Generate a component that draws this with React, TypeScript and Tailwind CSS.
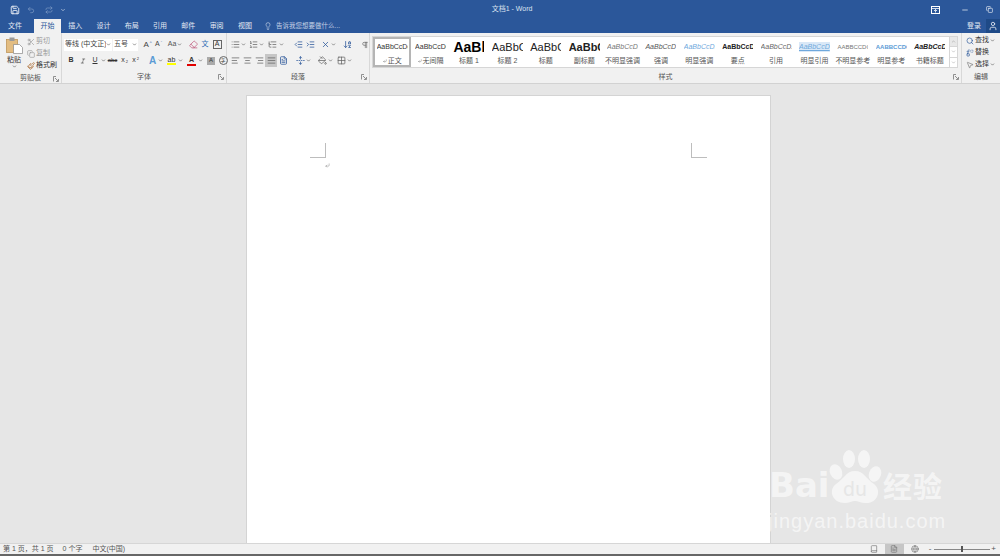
import React from 'react';
import {
  AlignCenter, AlignJustify, AlignLeft, AlignRight, ArrowDownAZ, Book, ChevronDown, ChevronUp, Copy,
  CornerDownLeft, Eraser, FileText, Globe, Grid2x2, IndentDecrease, IndentIncrease, Italic, Lightbulb, List, ListOrdered, ListTree,
  Minus, MousePointer2, PaintBucket, Paintbrush, Pilcrow, Repeat, Replace, Save, Scissors, Search,
  UnfoldVertical, User, Undo2, X,
} from 'lucide-react';

const sans = 'font-["Liberation_Sans","Noto_Sans_CJK_SC",sans-serif]';

const tabs = ['插入', '设计', '布局', '引用', '邮件', '审阅', '视图'];

const styleItems = [
  { label: '正文', mark: true, sample: 'AaBbCcDc', cls: 'text-[7px] text-[#333]' },
  { label: '无间隔', mark: true, sample: 'AaBbCcDc', cls: 'text-[7px] text-[#333]' },
  { label: '标题 1', sample: 'AaBbC', cls: 'text-[14px] font-bold text-black' },
  { label: '标题 2', sample: 'AaBbC', cls: 'text-[11px] text-[#222]' },
  { label: '标题', sample: 'AaBbC', cls: 'text-[11px] text-[#222]' },
  { label: '副标题', sample: 'AaBbC', cls: 'text-[11px] font-bold text-[#222]' },
  { label: '不明显强调', sample: 'AaBbCcD.', cls: 'text-[7px] italic text-[#777]' },
  { label: '强调', sample: 'AaBbCcD.', cls: 'text-[7px] italic text-[#555]' },
  { label: '明显强调', sample: 'AaBbCcD.', cls: 'text-[7px] italic text-[#6fa8dc]' },
  { label: '要点', sample: 'AaBbCcD', cls: 'text-[7px] font-bold text-[#222]' },
  { label: '引用', sample: 'AaBbCcD.', cls: 'text-[7px] italic text-[#666]' },
  { label: '明显引用', sample: 'AaBbCcD', cls: 'text-[7px] italic text-[#6fa8dc] bg-[#d9e8f7] underline' },
  { label: '不明显参考', sample: 'AABBCCDC', cls: 'text-[6px] text-[#777]' },
  { label: '明显参考', sample: 'AABBCCDC', cls: 'text-[6px] font-bold text-[#5b9bd5]' },
  { label: '书籍标题', sample: 'AaBbCcD', cls: 'text-[7px] font-bold italic text-[#222]' },
];

const Caret = () => <ChevronDown size={5} strokeWidth={3} className="text-[#555] shrink-0" />;

const Launcher = () => (
  <svg width="6" height="6" viewBox="0 0 6 6" className="text-[#777]">
    <path d="M0.5 5.5V0.5H3M5.5 3V5.5H3M2 2L5 5" fill="none" stroke="currentColor" strokeWidth="0.8" />
  </svg>
);

const PasteIcon = () => (
  <svg width="17" height="17" viewBox="0 0 17 17">
    <rect x="0.5" y="2.5" width="11" height="13" fill="#e3bd82" stroke="#b98d4e" strokeWidth="0.7" />
    <rect x="3.5" y="0.5" width="5" height="3.5" fill="#9a9a9a" />
    <path d="M7.5 7.5h6l3 3v6h-9z" fill="#fff" stroke="#888" strokeWidth="0.7" />
  </svg>
);

const RibbonDisplayIcon = () => (
  <svg width="9" height="8" viewBox="0 0 9 8" fill="none" stroke="currentColor">
    <rect x="0.5" y="0.5" width="8" height="7" />
    <path d="M0.5 2.5h8M4.5 6.5v-3M3 5l1.5-1.5L6 5" strokeWidth="0.8" />
  </svg>
);

const GroupLabel = ({ text, launcher = true }: { text: string; launcher?: boolean }) => (
  <div className="h-[13px] flex items-center justify-center relative text-[7px] text-[#555] pt-[1px]">
    {text}
    {launcher && <span className="absolute right-[2px] top-[4px] flex"><Launcher /></span>}
  </div>
);

const Tool = ({ w, center, children, className = '' }: { w: number; center?: boolean; children: React.ReactNode; className?: string }) => (
  <div style={{ width: w }} className={`h-[13px] flex items-center gap-[1px] shrink-0 ${center ? 'justify-center' : ''} ${className}`}>
    {children}
  </div>
);

const App: React.FC = () => {
  return (
    <div className={`w-[1000px] h-[556px] flex flex-col overflow-hidden relative bg-[#e6e6e6] ${sans}`}>
      {/* title bar */}
      <div className="h-[19px] bg-[#2b579a] flex items-center text-white shrink-0">
        <div className="flex items-center w-[472px] pl-[10px] gap-[7px]">
          <Save size={10} strokeWidth={2} />
          <Undo2 size={8} className="text-[#7f9cc6]" />
          <Repeat size={8} className="text-[#7f9cc6] ml-[3px]" />
          <ChevronDown size={6} />
        </div>
        <div className="w-[80px] text-center text-[7px] text-[#dbe4f1]">文档1 - Word</div>
        <div className="flex-1 flex items-center justify-end pr-[7px]">
          <span className="mr-[21px] flex"><RibbonDisplayIcon /></span>
          <Minus size={8} className="mr-[17px]" />
          <Copy size={7} />
        </div>
      </div>

      {/* tabs */}
      <div className="h-[14px] bg-[#2b579a] flex items-stretch text-[7px] text-[#e3e9f3] shrink-0">
        <div className="w-[34px] flex items-center justify-center pr-[4px]">文件</div>
        <div className="w-[27px] flex items-center justify-center bg-[#f1f1f1] text-[#2b579a]">开始</div>
        {tabs.map((t) => (
          <div key={t} className="w-[28.3px] flex items-center justify-center">{t}</div>
        ))}
        <div className="flex items-center ml-[5px] gap-[4px] text-[#c5d2e6]">
          <Lightbulb size={8} />
          <span className="text-[6.5px]">告诉我您想要做什么...</span>
        </div>
        <div className="flex-1" />
        <div className="flex items-center pr-[5px]">登录</div>
        <div className="w-[14px] bg-[#1f4a87] flex items-center justify-center"><User size={10} /></div>
      </div>

      {/* ribbon */}
      <div className="h-[51px] bg-[#f1f1f1] border-b border-[#d2d2d2] flex text-[#555] shrink-0">
        {/* clipboard */}
        <div className="w-[62px] border-r border-[#d8d8d8] flex flex-col shrink-0">
          <div className="flex-1 flex pt-[2px]">
            <div className="w-[26px] flex flex-col items-center pl-[2px] pt-[2px]">
              <PasteIcon />
              <span className="text-[7px] leading-[9px] mt-[1px] text-[#333]">粘贴</span>
              <Caret />
            </div>
            <div className="flex flex-col text-[7px] ml-[1px]">
              <Tool w={34} className="text-[#999]"><Scissors size={8} /> 剪切</Tool>
              <Tool w={34} className="text-[#999] mt-[-1px]"><Copy size={8} /> 复制</Tool>
              <Tool w={34} className="text-[#333] mt-[-1px]"><Paintbrush size={8} className="text-[#a8652a]" /> 格式刷</Tool>
            </div>
          </div>
          <GroupLabel text="剪贴板" />
        </div>

        {/* font */}
        <div className="w-[165px] border-r border-[#d8d8d8] flex flex-col shrink-0">
          <div className="flex-1 flex flex-col pt-[5px] gap-[3px] pl-[2px]">
            <div className="flex items-center h-[13px]">
              <div className="w-[48px] h-[12px] bg-white flex items-center justify-between px-[1px] text-[7px] text-[#444]">
                <span className="whitespace-nowrap overflow-hidden">等线 (中文正)</span><Caret />
              </div>
              <div className="w-[25px] h-[12px] bg-white ml-[1px] flex items-center justify-between px-[1px] text-[7px] text-[#444]">
                <span>五号</span><Caret />
              </div>
              <Tool w={11} center className="ml-[4px] text-[8px] text-[#444]">A<sup className="text-[4px] text-[#2b579a]">^</sup></Tool>
              <Tool w={11} center className="text-[7px] text-[#444]">A<sup className="text-[4px] text-[#2b579a]">ˇ</sup></Tool>
              <Tool w={16} center className="ml-[3px] text-[7px]">Aa <Caret /></Tool>
              <Tool w={12} center className="ml-[4px]"><Eraser size={9} className="text-[#c05a7c]" /></Tool>
              <Tool w={12} center className="text-[7px] text-[#2f6eb5]">文</Tool>
              <Tool w={12} center><span className="w-[9px] h-[9px] border border-[#666] flex items-center justify-center text-[7px] text-[#333]">A</span></Tool>
            </div>
            <div className="flex items-center h-[13px] text-[7px] text-[#333] pl-[1px]">
              <Tool w={12} center className="font-bold">B</Tool>
              <Tool w={12} center><Italic size={6} /></Tool>
              <Tool w={12} center className="underline">U</Tool>
              <Caret />
              <Tool w={13} center className="line-through text-[6px]">abc</Tool>
              <Tool w={11} center>x<sub className="text-[4px]">2</sub></Tool>
              <Tool w={11} center>x<sup className="text-[4px]">2</sup></Tool>
              <span className="w-px h-[11px] bg-[#d0d0d0] mx-[3px]" />
              <Tool w={11} center className="text-[#5b9bd5] font-bold text-[10px]">A</Tool>
              <Caret />
              <Tool w={13} center className="ml-[2px]">
                <span className="flex flex-col items-center leading-[7px]"><span>ab</span><span className="w-[9px] h-[2px] bg-[#ffff00]" /></span>
              </Tool>
              <Caret />
              <Tool w={13} center className="ml-[2px]">
                <span className="flex flex-col items-center leading-[8px]"><span className="font-bold">A</span><span className="w-[9px] h-[2px] bg-[#e00000]" /></span>
              </Tool>
              <Caret />
              <Tool w={12} center className="ml-[2px]"><span className="w-[8px] h-[8px] bg-[#aaa] flex items-center justify-center text-[6px]">A</span></Tool>
              <Tool w={12} center><span className="w-[9px] h-[9px] rounded-full border border-[#666] flex items-center justify-center text-[5px]">字</span></Tool>
            </div>
          </div>
          <GroupLabel text="字体" />
        </div>

        {/* paragraph */}
        <div className="w-[143px] border-r border-[#d8d8d8] flex flex-col shrink-0">
          <div className="flex-1 flex flex-col pt-[5px] gap-[3px] pl-[2px] text-[#666]">
            <div className="flex items-center h-[13px]">
              <Tool w={12} center><List size={9} /></Tool><Caret />
              <Tool w={12} center className="ml-[1px]"><ListOrdered size={9} /></Tool><Caret />
              <Tool w={14} center className="ml-[1px]"><ListTree size={9} /></Tool><Caret />
              <Tool w={12} center className="ml-[8px]"><IndentDecrease size={9} className="text-[#2b579a]" /></Tool>
              <Tool w={12} center><IndentIncrease size={9} className="text-[#2b579a]" /></Tool>
              <Tool w={12} center className="ml-[3px]"><X size={9} className="text-[#2b579a]" /></Tool><Caret />
              <Tool w={13} center className="ml-[5px]"><ArrowDownAZ size={9} className="text-[#2b579a]" /></Tool>
              <Tool w={13} center className="ml-[4px]"><Pilcrow size={8} /></Tool>
            </div>
            <div className="flex items-center h-[13px]">
              <Tool w={12} center><AlignLeft size={9} /></Tool>
              <Tool w={12} center><AlignCenter size={9} /></Tool>
              <Tool w={12} center><AlignRight size={9} /></Tool>
              <Tool w={12} center className="bg-[#c6c6c6]"><AlignJustify size={9} /></Tool>
              <Tool w={12} center><FileText size={9} className="text-[#2b579a]" /></Tool>
              <Tool w={12} center className="ml-[5px]"><UnfoldVertical size={9} className="text-[#2b579a]" /></Tool><Caret />
              <Tool w={12} center className="ml-[5px]"><PaintBucket size={9} /></Tool><Caret />
              <Tool w={12} center className="ml-[2px]"><Grid2x2 size={9} /></Tool><Caret />
            </div>
          </div>
          <GroupLabel text="段落" />
        </div>

        {/* styles */}
        <div className="w-[592px] border-r border-[#d8d8d8] flex flex-col shrink-0">
          <div className="flex-1 pt-[3px] pl-[2px] pr-[3px]">
            <div className="h-[32px] bg-white border border-[#d6d6d6] flex">
              {styleItems.map((s, i) => (
                <div
                  key={s.label}
                  className={`w-[38.4px] shrink-0 flex flex-col items-center overflow-hidden ${i === 0 ? 'border-[2px] border-[#b5b5b5]' : 'pt-[1px]'}`}
                >
                  <div className="h-[18px] w-[31px] flex items-center overflow-hidden whitespace-nowrap">
                    <span className={s.cls}>{s.sample}</span>
                  </div>
                  <div className="text-[7px] leading-[9px] text-[#555] whitespace-nowrap flex items-center gap-[1px]">
                    {s.mark && <CornerDownLeft size={4} />}
                    {s.label}
                  </div>
                </div>
              ))}
              <div className="flex-1" />
              <div className="w-[8px] flex flex-col border-l border-[#d6d6d6] text-[#888]">
                <div className="flex-1 flex items-center justify-center bg-[#e8e8e8]"><ChevronUp size={5} /></div>
                <div className="flex-1 flex items-center justify-center border-y border-[#d6d6d6]"><ChevronDown size={5} /></div>
                <div className="flex-1 flex items-center justify-center"><ChevronDown size={5} /></div>
              </div>
            </div>
          </div>
          <GroupLabel text="样式" />
        </div>

        {/* editing */}
        <div className="flex-1 flex flex-col">
          <div className="flex-1 flex flex-col pt-[1px] pl-[4px] text-[7px] text-[#333]">
            <Tool w={34}><Search size={8} className="text-[#2b579a]" /> 查找 <Caret /></Tool>
            <Tool w={34} className="mt-[-1px]"><Replace size={8} className="text-[#2b579a]" /> 替换</Tool>
            <Tool w={34} className="mt-[-1px]"><MousePointer2 size={8} className="text-[#777]" /> 选择 <Caret /></Tool>
          </div>
          <GroupLabel text="编辑" launcher={false} />
        </div>
      </div>

      {/* document area */}
      <div className="flex-1 min-h-0 overflow-hidden pl-[246px] pt-[11px]">
        <div className="w-[525px] h-[460px] bg-white border border-[#d4d4d4] px-[63px] pt-[47px]">
          <div className="flex justify-between">
            <div className="w-[16px] h-[15px] border-r border-b border-[#bdbdbd]" />
            <div className="w-[16px] h-[15px] border-l border-b border-[#bdbdbd]" />
          </div>
          <div className="pl-[15px] pt-[5px] text-[#777]"><CornerDownLeft size={5} /></div>
        </div>
      </div>

      {/* status bar */}
      <div className="h-[13px] bg-[#f1f1f1] border-t border-[#d6d6d6] border-b-2 border-b-[#666] flex items-center text-[7px] text-[#555] shrink-0">
        <span className="ml-[3px]">第 1 页，共 1 页</span>
        <span className="ml-[9px]">0 个字</span>
        <span className="ml-[10px]">中文(中国)</span>
        <div className="flex-1" />
        <div className="flex items-center h-full text-[#777]">
          <Book size={8} className="mr-[7px]" />
          <div className="w-[19px] h-full bg-[#c6c6c6] flex items-center justify-center"><FileText size={8} /></div>
          <Globe size={8} className="ml-[7px] mr-[10px]" />
        </div>
        <span className="text-[8px] mr-[3px]">-</span>
        <div className="w-[56px] h-px bg-[#888] flex items-center justify-center">
          <span className="w-[2px] h-[6px] bg-[#555]" />
        </div>
        <span className="text-[8px] ml-[1px] mr-[4px]">+</span>
      </div>

      {/* baidu watermark */}
      <div className="absolute left-[768px] top-[449px] w-[180px] h-[86px] text-white/60 pointer-events-none">
        <div className="flex items-end h-[58px]">
          <span className="text-[34px] leading-[44px] font-bold font-['DejaVu_Sans',sans-serif] w-[59px] pl-[1px]">Bai</span>
          <svg width="56" height="58" viewBox="0 0 56 58" className="shrink-0" fill="currentColor">
            <ellipse cx="9" cy="23" rx="6" ry="8" transform="rotate(-25 9 23)" />
            <ellipse cx="22" cy="10" rx="6" ry="9" />
            <ellipse cx="37" cy="10" rx="6" ry="9" />
            <ellipse cx="48" cy="25" rx="6" ry="8" transform="rotate(20 48 25)" />
            <path d="M28 22c9 0 11 8 19 13 8 6 4 20-9 19-4 0-7-2-10-2s-6 2-10 2c-13 0-17-13-9-19 8-5 10-13 19-13z" />
            <text x="28" y="47" textAnchor="middle" fontSize="19" fontFamily="DejaVu Sans, sans-serif" fill="#e6e6e6">du</text>
          </svg>
          <span className="text-[29px] leading-[38px] font-bold whitespace-nowrap tracking-[1px]">经验</span>
        </div>
        <div className="text-[20px] leading-[24px] mt-[2px] tracking-[1px] whitespace-nowrap font-['Liberation_Sans',sans-serif]">jingyan.baidu.com</div>
      </div>
    </div>
  );
};

export default App;
